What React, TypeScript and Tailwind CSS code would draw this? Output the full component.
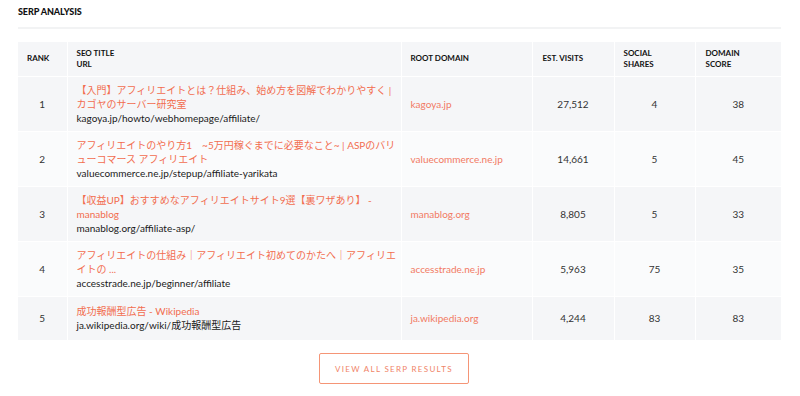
const rows = [
  {
    rank: 1,
    title: ["【入門】アフィリエイトとは？仕組み、始め方を図解でわかりやすく |", "カゴヤのサーバー研究室"],
    url: "kagoya.jp/howto/webhomepage/affiliate/",
    domain: "kagoya.jp",
    visits: "27,512",
    shares: 4,
    score: 38,
  },
  {
    rank: 2,
    title: ["アフィリエイトのやり方1　~5万円稼ぐまでに必要なこと~ | ASPのバリ", "ューコマース アフィリエイト"],
    url: "valuecommerce.ne.jp/stepup/affiliate-yarikata",
    domain: "valuecommerce.ne.jp",
    visits: "14,661",
    shares: 5,
    score: 45,
  },
  {
    rank: 3,
    title: ["【収益UP】おすすめなアフィリエイトサイト9選【裏ワザあり】 -", "manablog"],
    url: "manablog.org/affiliate-asp/",
    domain: "manablog.org",
    visits: "8,805",
    shares: 5,
    score: 33,
  },
  {
    rank: 4,
    title: ["アフィリエイトの仕組み｜アフィリエイト初めてのかたへ｜アフィリエ", "イトの ..."],
    url: "accesstrade.ne.jp/beginner/affiliate",
    domain: "accesstrade.ne.jp",
    visits: "5,963",
    shares: 75,
    score: 35,
  },
  {
    rank: 5,
    title: ["成功報酬型広告 - Wikipedia"],
    url: "ja.wikipedia.org/wiki/成功報酬型広告",
    domain: "ja.wikipedia.org",
    visits: "4,244",
    shares: 83,
    score: 83,
  },
]

const font = "font-['Lato','Noto_Sans_CJK_JP',sans-serif]"

export default function App() {
  return (
    <div className={`w-[800px] h-[396px] bg-white px-[18px] pr-[19px] pt-[6px] ${font}`}>
      <h2 className="text-[9px] font-black text-[#111] tracking-[-0.1px] leading-[12px]">SERP ANALYSIS</h2>
      <div className="mt-[9px] h-[2px] bg-[#f2f3f4]" />

      <table className="mt-[13px] w-full table-fixed border-collapse">
        <colgroup>
          <col className="w-[49px]" />
          <col className="w-[334px]" />
          <col className="w-[131px]" />
          <col className="w-[82px]" />
          <col className="w-[81px]" />
          <col />
        </colgroup>
        <thead>
          <tr className="h-[34px] bg-[#f5f6f8] text-left text-[8px] font-black leading-[11px] text-[#111]">
            <th className="px-[9px] border-r border-white">RANK</th>
            <th className="px-[9px] border-r border-white">
              SEO TITLE
              <br />
              URL
            </th>
            <th className="px-[9px] border-r border-white">ROOT DOMAIN</th>
            <th className="px-[10px] border-r border-white">EST. VISITS</th>
            <th className="px-[9px] border-r border-white">
              SOCIAL
              <br />
              SHARES
            </th>
            <th className="px-[10px]">
              DOMAIN
              <br />
              SCORE
            </th>
          </tr>
        </thead>
        <tbody>
          {rows.map((r) => (
            <tr
              key={r.rank}
              className={`h-[44px] border-t border-white text-[10px] leading-[14px] ${
                r.rank % 2 === 1 ? "bg-[#f5f6f8]" : "bg-[#fafbfc]"
              }`}
            >
              <td className="py-[6px] text-center text-[#333] border-r border-white">{r.rank}</td>
              <td className="py-[6px] pl-[9px] pr-[4px] border-r border-white">
                {r.title.map((line) => (
                  <div key={line} className="whitespace-nowrap text-[#f26d4f]">
                    {line}
                  </div>
                ))}
                <div className="text-[#1a1a1a]">{r.url}</div>
              </td>
              <td className="px-[9px] text-[#f27a63] border-r border-white">{r.domain}</td>
              <td className="text-center text-[#333] border-r border-white">{r.visits}</td>
              <td className="text-center text-[#333] border-r border-white">{r.shares}</td>
              <td className="text-center text-[#333]">{r.score}</td>
            </tr>
          ))}
        </tbody>
      </table>

      <div className="mt-[13px] flex justify-center pr-[11px]">
        <button className="h-[31px] w-[150px] rounded-[2px] border border-[#f59576] text-[8px] tracking-[1.3px] text-[#f08468] font-['Lato',sans-serif]">
          VIEW ALL SERP RESULTS
        </button>
      </div>
    </div>
  )
}
